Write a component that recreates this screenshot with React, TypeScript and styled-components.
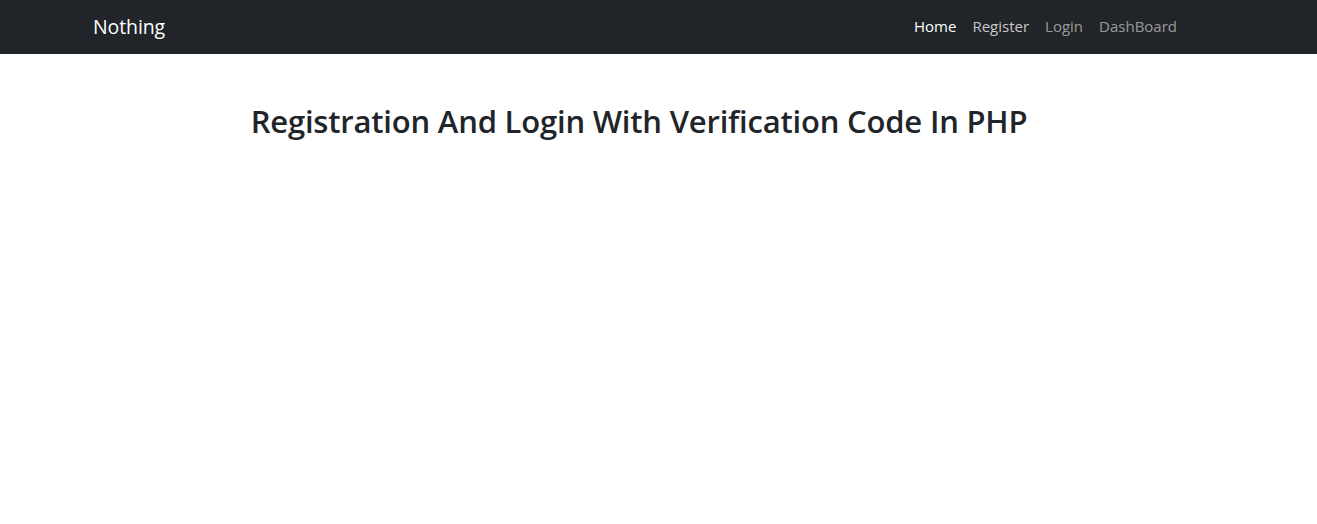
import React from "react";
import styled, { createGlobalStyle } from "styled-components";

const Global = createGlobalStyle`
  html, body { margin: 0; padding: 0; background: #fff; }
  body {
    font-family: "Open Sans", "Noto Sans", "Liberation Sans", sans-serif;
    color: #212529;
    -webkit-font-smoothing: antialiased;
  }
  * { box-sizing: border-box; }
`;

const Navbar = styled.nav`
  background: #212529;
  height: 54px;
  display: flex;
  align-items: center;
`;

const NavContainer = styled.div`
  width: 1116px;
  margin-left: 81px;
  padding: 0 12px;
  display: flex;
  align-items: center;
  justify-content: space-between;
`;

const Brand = styled.a`
  color: #fff;
  font-size: 19.5px;
  text-decoration: none;
  letter-spacing: -0.1px;
  margin-bottom: 2px;
`;

const NavList = styled.ul`
  list-style: none;
  margin: 0 0 2px;
  padding: 0;
  display: flex;
`;

const NavLink = styled.a<{ $tone: "active" | "hover" | "idle" }>`
  display: block;
  padding: 8px 8px;
  font-size: 15px;
  letter-spacing: 0px;
  text-decoration: none;
  color: ${(p) =>
    p.$tone === "active"
      ? "#fff"
      : p.$tone === "hover"
      ? "rgba(255,255,255,0.75)"
      : "rgba(255,255,255,0.55)"};
`;

const Main = styled.main`
  display: flex;
  justify-content: center;
  width: 1116px;
  margin-left: 81px;
  padding: 0 12px;
`;

const Title = styled.h2`
  margin: 49px 0 0;
  font-size: 31px;
  font-weight: 600;
  line-height: 1.2;
  letter-spacing: -0.2px;
  color: #212529;
`;

const links: { label: string; tone: "active" | "hover" | "idle" }[] = [
  { label: "Home", tone: "active" },
  { label: "Register", tone: "hover" },
  { label: "Login", tone: "idle" },
  { label: "DashBoard", tone: "idle" },
];

export default function App() {
  return (
    <>
      <Global />
      <Navbar>
        <NavContainer>
          <Brand href="#">Nothing</Brand>
          <NavList>
            {links.map((l) => (
              <li key={l.label}>
                <NavLink href="#" $tone={l.tone}>
                  {l.label}
                </NavLink>
              </li>
            ))}
          </NavList>
        </NavContainer>
      </Navbar>
      <Main>
        <Title>Registration And Login With Verification Code In PHP</Title>
      </Main>
    </>
  );
}
